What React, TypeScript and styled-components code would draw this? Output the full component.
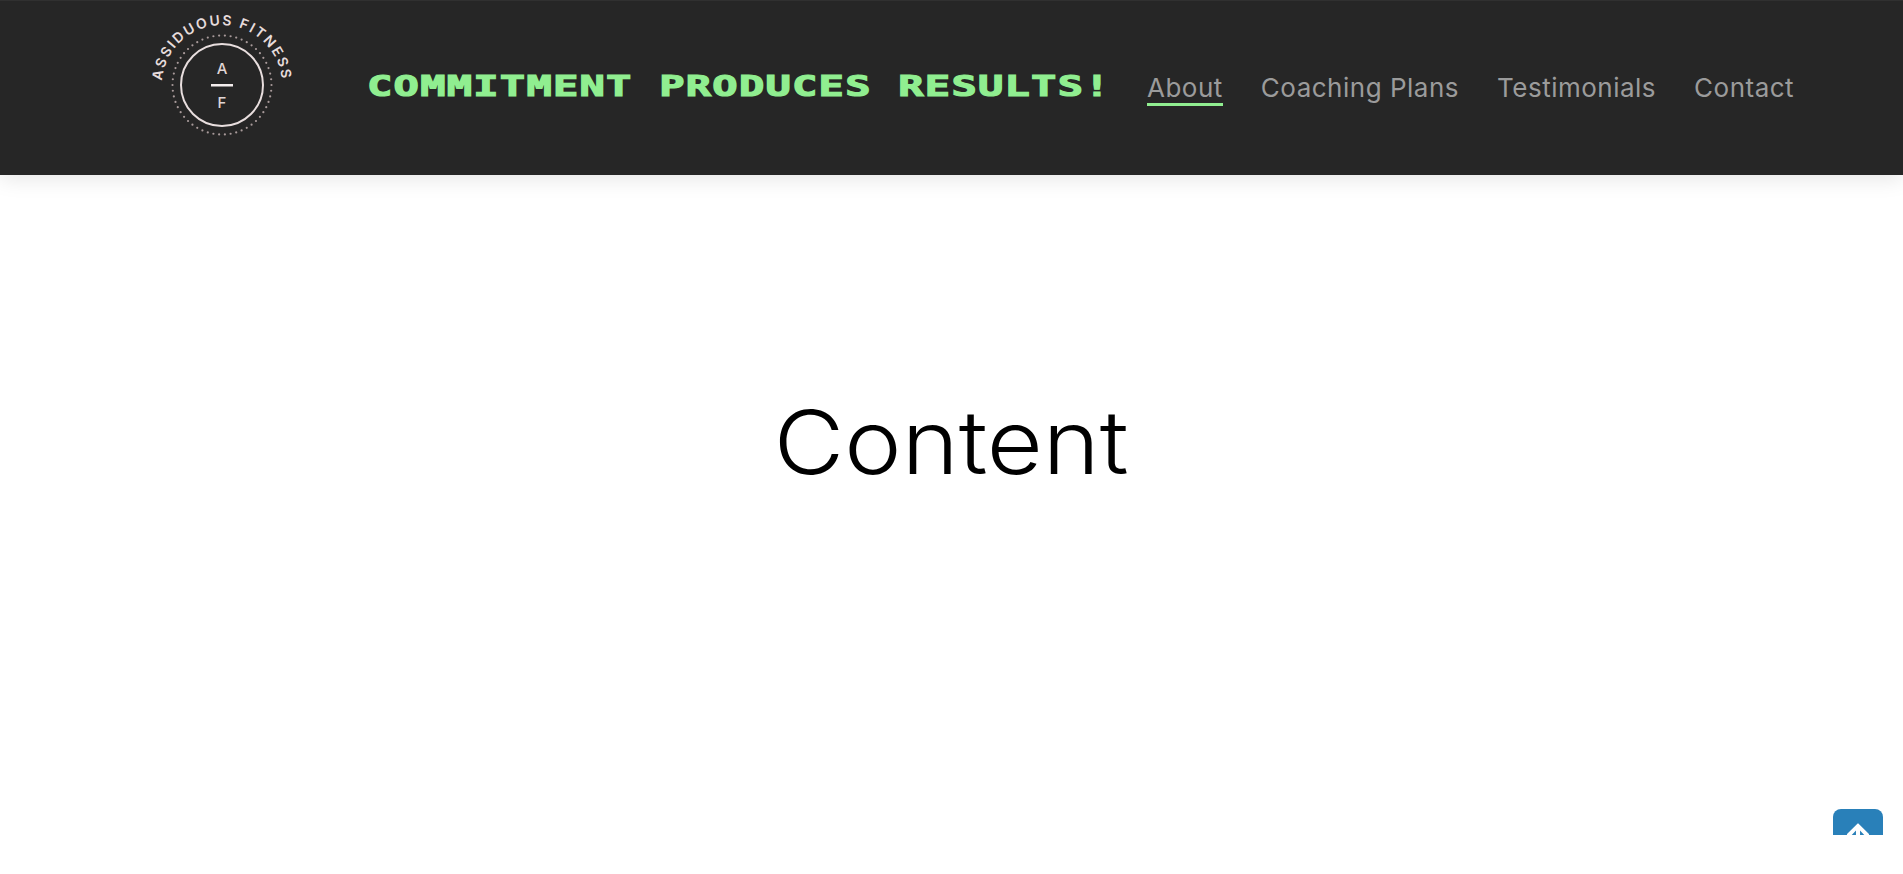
import React from 'react'
import styled, { createGlobalStyle } from 'styled-components'
import { FaArrowUp } from 'react-icons/fa'

const GlobalStyle = createGlobalStyle`
  html, body {
    margin: 0;
    padding: 0;
    background: #fff;
  }
  body {
    font-family: 'Inter', 'Liberation Sans', sans-serif;
  }
`

const Page = styled.div`
  position: relative;
  height: 835px;
  overflow: hidden;
  background: #fff;
`

const Header = styled.header`
  display: flex;
  align-items: center;
  box-sizing: border-box;
  height: 175px;
  padding-left: 147px;
  background: #262626;
  border-top: 1px solid #303030;
  box-shadow: 0 4px 20px rgba(0, 0, 0, 0.1);
`

const LogoMark = styled.svg`
  flex: none;
  width: 150px;
  height: 150px;
  margin-top: -6px;
`

const Slogan = styled.div`
  flex: none;
  width: 741px;
  margin-left: 70px;
  margin-top: -4px;
  font-family: 'DejaVu Sans Mono', 'Liberation Mono', monospace;
  font-size: 29px;
  font-weight: 700;
  line-height: 1;
  color: #90ee90;
  white-space: pre;
  -webkit-text-stroke: 1.2px #90ee90;
`

const SloganText = styled.span`
  display: inline-block;
  letter-spacing: 0.86px;
  transform: scaleX(1.45);
  transform-origin: left center;
`

const Nav = styled.nav`
  display: flex;
  align-items: center;
  gap: 38px;
  margin-left: 39px;
  margin-top: 3px;
`

const NavLink = styled.a<{ active?: boolean }>`
  font-size: 26px;
  line-height: 30px;
  letter-spacing: 0.5px;
  color: #9b9b9b;
  white-space: nowrap;
  border-bottom: 3px solid ${({ active }) => (active ? '#90ee90' : 'transparent')};
`

const Main = styled.main`
  display: flex;
  justify-content: center;
  padding-top: 215px;
`

const Title = styled.h1`
  margin: 0;
  font-family: 'Inter', 'Liberation Sans', sans-serif;
  font-size: 88px;
  font-weight: 300;
  line-height: 1.2;
  color: #000;
  transform: scaleX(1.1);
`

const ScrollTop = styled.button`
  position: absolute;
  top: 809px;
  left: 1833px;
  display: flex;
  justify-content: center;
  align-items: flex-start;
  width: 50px;
  height: 50px;
  padding: 13px 0 0;
  border: 0;
  border-radius: 8px;
  background: #2980b9;
  color: #fff;
`

function Logo() {
  const dots = Array.from({ length: 54 }, (_, i) => (i / 54) * Math.PI * 2)
  return (
    <LogoMark viewBox="0 0 150 150">
      <defs>
        <path id="logo-arc" d="M 15.8 85 A 60 60 0 1 1 134.2 85" fill="none" />
      </defs>
      <text fontFamily="Inter, sans-serif" fontSize="14" fontWeight="600" fill="#e6dcdc" letterSpacing="2">
        <textPath href="#logo-arc" startOffset="50%" textAnchor="middle">
          ASSIDUOUS FITNESS
        </textPath>
      </text>
      {dots.map(a => (
        <circle key={a} cx={75 + 49.5 * Math.cos(a)} cy={75 + 49.5 * Math.sin(a)} r="1.1" fill="#a89a9a" />
      ))}
      <circle cx="75" cy="75" r="41" fill="none" stroke="#e8dede" strokeWidth="2" />
      <rect x="64" y="74" width="22" height="2.5" fill="#f4eeee" />
      <text x="75" y="63.5" textAnchor="middle" fontFamily="Inter, sans-serif" fontSize="15" fontWeight="500" fill="#e0d6d6">
        A
      </text>
      <text x="75" y="98" textAnchor="middle" fontFamily="Inter, sans-serif" fontSize="15" fontWeight="500" fill="#e0d6d6">
        F
      </text>
    </LogoMark>
  )
}

export default function App() {
  return (
    <Page>
      <GlobalStyle />
      <Header>
        <Logo />
        <Slogan>
          <SloganText>COMMITMENT PRODUCES RESULTS!</SloganText>
        </Slogan>
        <Nav>
          <NavLink active>About</NavLink>
          <NavLink>Coaching Plans</NavLink>
          <NavLink>Testimonials</NavLink>
          <NavLink>Contact</NavLink>
        </Nav>
      </Header>
      <Main>
        <Title>Content</Title>
      </Main>
      <ScrollTop aria-label="Back to top">
        <FaArrowUp size={26} />
      </ScrollTop>
    </Page>
  )
}
